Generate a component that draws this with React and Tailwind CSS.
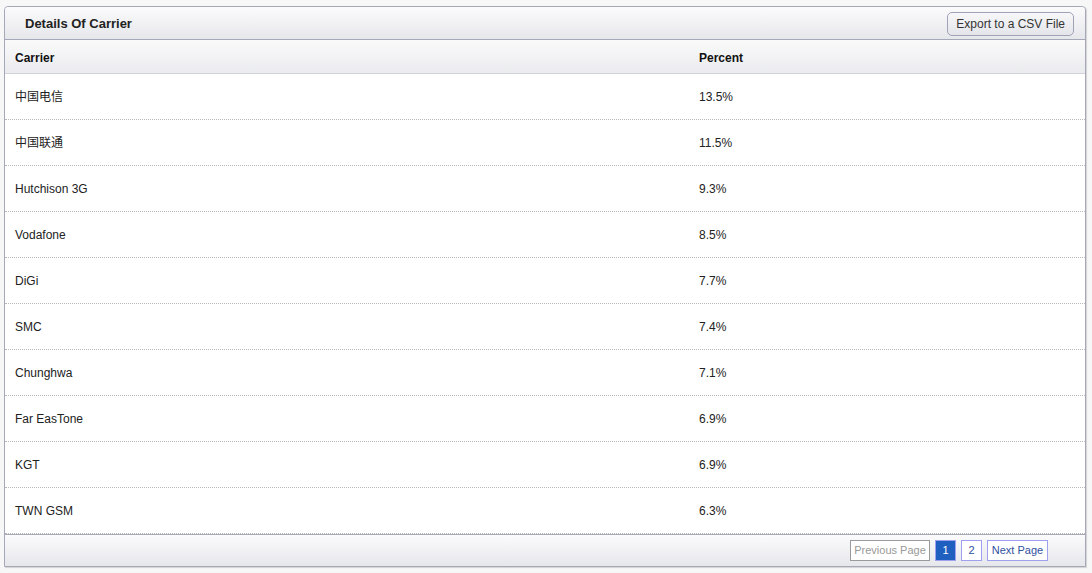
import React from "react";

const rows = [
    { carrier: "中国电信", percent: "13.5%" },
    { carrier: "中国联通", percent: "11.5%" },
    { carrier: "Hutchison 3G", percent: "9.3%" },
    { carrier: "Vodafone", percent: "8.5%" },
    { carrier: "DiGi", percent: "7.7%" },
    { carrier: "SMC", percent: "7.4%" },
    { carrier: "Chunghwa", percent: "7.1%" },
    { carrier: "Far EasTone", percent: "6.9%" },
    { carrier: "KGT", percent: "6.9%" },
    { carrier: "TWN GSM", percent: "6.3%" },
];

const App = () => {
    return (
        <div className="min-h-[573px] w-[1092px] bg-[#f7f7f7] pt-[6px] pl-[4px] font-['Liberation_Sans','Noto_Sans_CJK_SC',Arial,sans-serif] text-[12px] text-[#222]">
            <div className="w-[1082px] rounded-t-[4px] border border-[#a4a8b8] bg-white shadow-[1px_1px_1px_rgba(0,0,0,0.15)]">
                {/* title bar */}
                <div className="flex h-[33px] items-center justify-between border-b border-[#a4a8b8] bg-gradient-to-b from-[#fbfbfc] to-[#e6e7eb] pl-[20px] pr-[11px] pt-[2px] rounded-t-[4px]">
                    <h3 className="text-[13px] font-bold text-[#222]">Details Of Carrier</h3>
                    <button className="h-[24px] rounded-[5px] border border-[#a0a3b8] bg-gradient-to-b from-[#f8f8fa] to-[#e4e5ea] px-[8px] text-[12px] text-[#333]">
                        Export to a CSV File
                    </button>
                </div>

                {/* column header */}
                <div className="flex h-[34px] items-center border-b border-[#d0d3da] bg-gradient-to-b from-[#fafafa] to-[#eaebee] pt-[2px] font-bold text-[#111]">
                    <div className="w-[684px] pl-[10px]">Carrier</div>
                    <div className="pl-[10px]">Percent</div>
                </div>

                {/* rows */}
                <div>
                    {rows.map((r, i) => (
                        <div
                            key={i}
                            className="flex h-[46px] items-center border-b border-dotted border-[#b8b8b8]"
                        >
                            <div className="w-[684px] pl-[10px]">{r.carrier}</div>
                            <div className="pl-[10px]">{r.percent}</div>
                        </div>
                    ))}
                </div>

                {/* footer / pagination */}
                <div className="flex h-[32px] items-center justify-end gap-[5px] border-t border-[#a4a8b8] bg-gradient-to-b from-[#fbfbfc] to-[#e6e7eb] pr-[37px] text-[11px]">
                    <span className="flex h-[21px] w-[80px] items-center justify-center border border-[#9a9a9a] bg-white text-[#999]">Previous Page</span>
                    <span className="flex h-[21px] w-[21px] items-center justify-center border border-[#a0a0f0] bg-[#1f5fbf] text-white">1</span>
                    <span className="flex h-[21px] w-[21px] items-center justify-center border border-[#a0a0f0] bg-white text-[#3050a0]">2</span>
                    <span className="flex h-[21px] w-[61px] items-center justify-center border border-[#a0a0f0] bg-white text-[#3050a0]">Next Page</span>
                </div>
            </div>
        </div>
    );
};

export default App;
